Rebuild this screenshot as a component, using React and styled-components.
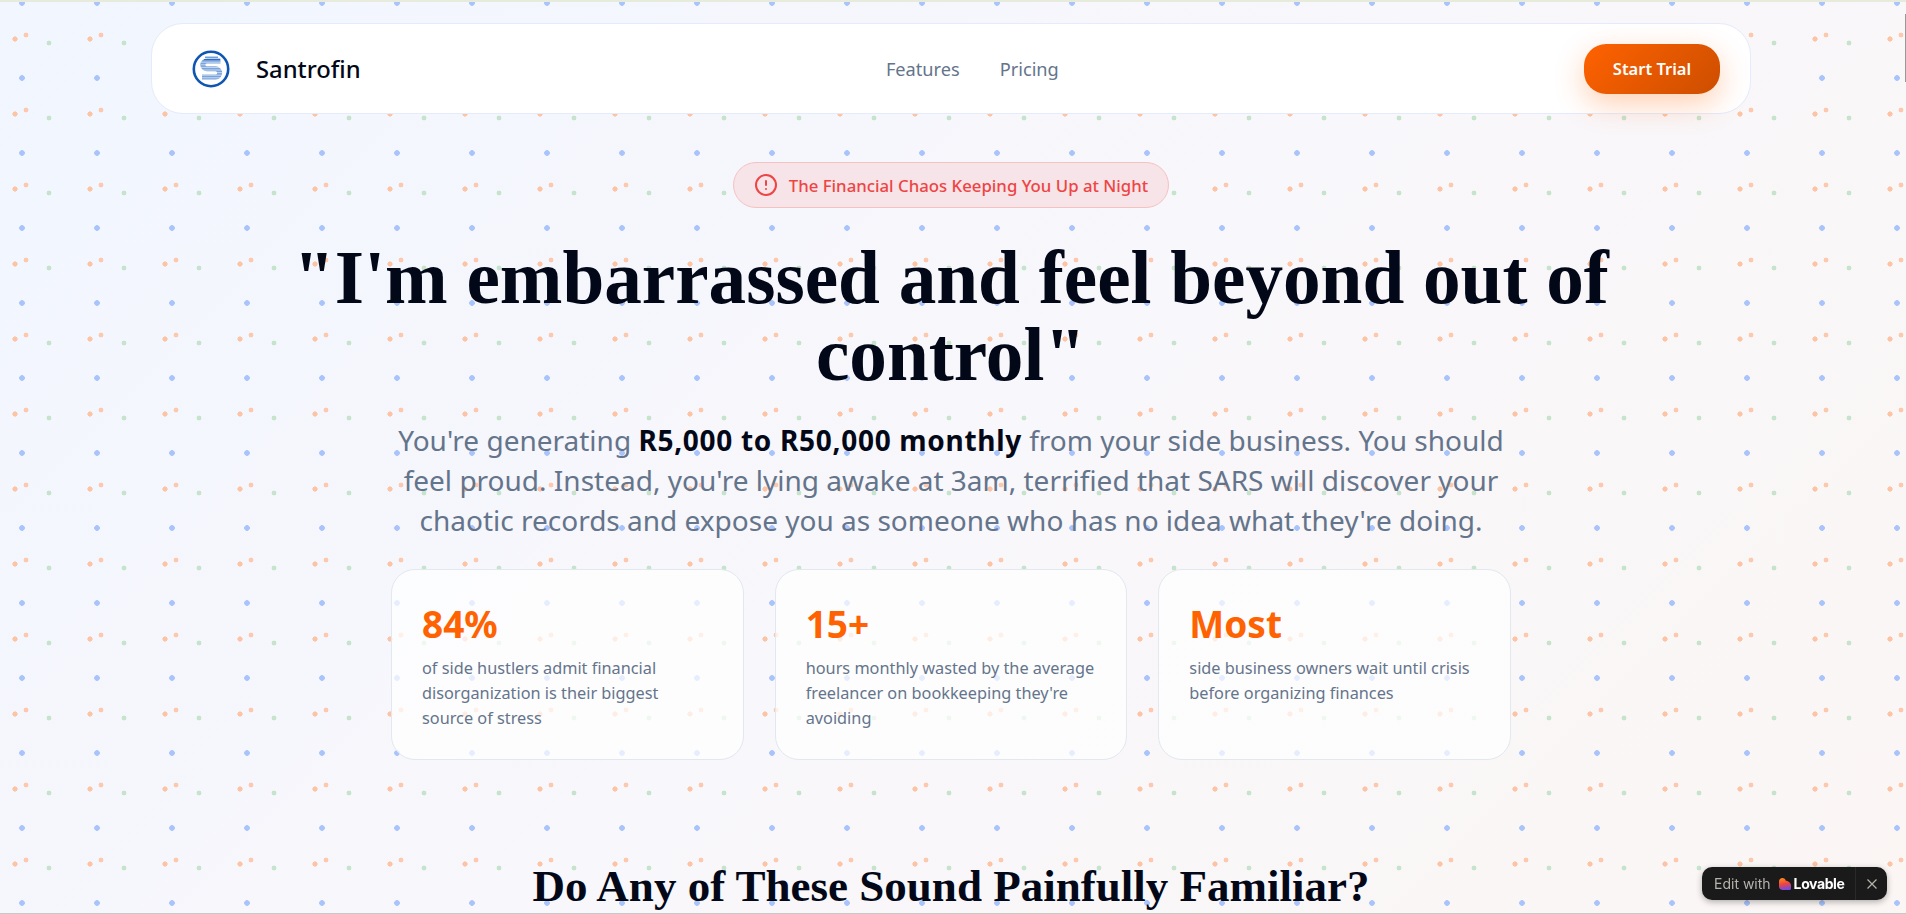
import React from 'react';
import styled, { createGlobalStyle } from 'styled-components';

const GlobalStyle = createGlobalStyle`
  html, body {
    margin: 0;
    padding: 0;
    height: 100%;
    overflow: hidden;
  }
  body {
    font-family: "Noto Sans", "Open Sans", Arial, sans-serif;
    color: #020817;
  }
`;

const dot = (x, y, r, color) =>
  `radial-gradient(circle at ${x}px ${y}px, ${color} ${r}px, transparent ${r + 0.6}px)`;

const Page = styled.div`
  height: 914px;
  overflow: hidden;
  box-sizing: border-box;
  padding-right: 4px;
  border-top: 2px solid #e6ebdc;
  border-bottom: 1px solid #c8c8c8;
  background-image:
    ${dot(22, 5, 2.5, '#a9c3fb')},
    ${dot(15, 37, 2.3, '#fcc4a5')},
    ${dot(26, 33, 2.1, '#fcc9ae')},
    ${dot(49, 41, 2.1, '#c6e3cb')},
    linear-gradient(135deg, #f1f6ff 0%, #f8f7fb 50%, #fbf6f4 100%);
  background-size: 75px 75px, 75px 75px, 75px 75px, 75px 75px, 100% 100%;
  background-position: 0 -4px, 0 0, 0 0, 0 0, 0 0;
`;

const ScrollThumb = styled.div`
  position: fixed;
  top: 14px;
  right: 0;
  width: 1px;
  height: 68px;
  background: #999;
`;

const Nav = styled.nav`
  width: 1600px;
  height: 91px;
  margin: 21px auto 0;
  padding: 0 30px 0 40px;
  box-sizing: border-box;
  display: flex;
  align-items: center;
  justify-content: space-between;
  background: #fff;
  border: 1px solid #e3ebfc;
  border-radius: 32px;
`;

const Brand = styled.div`
  display: flex;
  align-items: center;
  gap: 26px;
  font-size: 23.8px;
  font-weight: 500;
  color: #020817;
`;

const NavLinks = styled.div`
  display: flex;
  gap: 40px;
`;

const NavLink = styled.a`
  font-size: 18.2px;
  color: #64748b;
`;

const TrialButton = styled.button`
  width: 136px;
  height: 50px;
  border: none;
  border-radius: 22px;
  font-family: inherit;
  font-size: 16.5px;
  font-weight: 600;
  color: #fff;
  background: linear-gradient(135deg, #ff6200 0%, #cc4e00 100%);
  box-shadow: 0 10px 30px rgba(255, 98, 0, 0.3);
`;

const Hero = styled.section`
  display: flex;
  flex-direction: column;
  align-items: center;
  margin: 0 auto;
  padding-top: 48px;
`;

const Badge = styled.div`
  display: flex;
  align-items: center;
  gap: 11px;
  height: 46px;
  padding: 0 20px;
  box-sizing: border-box;
  border: 1px solid #f5c2c2;
  border-radius: 23px;
  background: #f6e4e8;
  color: #ef4444;
  font-size: 16.8px;
  font-weight: 500;
`;

const Title = styled.h1`
  width: 1400px;
  margin: 31px 0 0;
  text-align: center;
  font-family: "Liberation Serif", "Times New Roman", serif;
  font-size: 75.2px;
  line-height: 77px;
  font-weight: 700;
  color: #020817;
`;

const Lead = styled.p`
  width: 1120px;
  margin: 27px 0 0;
  text-align: center;
  font-size: 28px;
  line-height: 40px;
  color: #64748b;

  strong {
    font-weight: 700;
    letter-spacing: 0.7px;
    color: #020817;
  }
`;

const Stats = styled.div`
  display: grid;
  grid-template-columns: repeat(3, 1fr);
  gap: 31px;
  width: 1120px;
  margin-top: 29px;
`;

const Stat = styled.div`
  box-sizing: border-box;
  height: 191px;
  padding: 32px 30px 0;
  border: 1px solid #e2e8f0;
  border-radius: 24px;
  background: rgba(255, 255, 255, 0.7);
`;

const StatValue = styled.div`
  font-size: 37px;
  line-height: 44px;
  font-weight: 700;
  color: #ff6200;
`;

const StatText = styled.div`
  margin-top: 10px;
  font-size: 16.3px;
  line-height: 25px;
  color: #64748b;
`;

const SectionTitle = styled.h2`
  margin: 102px 0 0;
  text-align: center;
  font-family: "Liberation Serif", "Times New Roman", serif;
  font-size: 45px;
  line-height: 48px;
  font-weight: 700;
  color: #020817;
`;

const EditBadge = styled.div`
  position: fixed;
  right: 19px;
  bottom: 14px;
  display: flex;
  align-items: center;
  height: 33px;
  border-radius: 10px;
  background: #1a1a1a;
  box-shadow: 0 2px 6px rgba(0, 0, 0, 0.3);
  font-family: Inter, sans-serif;
  font-size: 14px;
`;

const EditLabel = styled.div`
  display: flex;
  align-items: center;
  width: 153px;
  box-sizing: border-box;
  gap: 8px;
  padding-left: 12px;
  color: #b5b3ad;
`;

const LovableName = styled.span`
  color: #fff;
  font-weight: 700;
  margin-left: -5px;
  letter-spacing: -0.4px;
`;

const CloseButton = styled.div`
  display: flex;
  align-items: center;
  justify-content: center;
  width: 31px;
  height: 33px;
  border-left: 1px solid #2a2a2a;
  color: #b5b3ad;
`;

const Logo = () => (
  <svg width="38" height="38" viewBox="0 0 38 38" fill="none">
    <circle cx="19" cy="19" r="17.2" stroke="#0f56b3" strokeWidth="2.6" />
    <path d="M28.5 11H15C9.5 11 9.5 18.8 15 18.8H23.5C29 18.8 29 27 23.5 27H10" stroke="#7aa3dc" strokeWidth="5" />
    <path d="M9 12.2H30M9 14.8H30M9 17.4H30M9 20H30M9 22.6H30M9 25.2H30M9 27.8H30" stroke="#fff" strokeWidth="0.6" />
    <path d="M13 7.2H26M12 9.6H28" stroke="#1a62c0" strokeWidth="0.9" />
  </svg>
);

const AlertIcon = () => (
  <svg width="24" height="24" viewBox="0 0 24 24" fill="none" stroke="currentColor" strokeWidth="2" strokeLinecap="round" strokeLinejoin="round">
    <circle cx="12" cy="12" r="10" />
    <line x1="12" y1="8" x2="12" y2="12" />
    <line x1="12" y1="16" x2="12.01" y2="16" />
  </svg>
);

const LovableMark = () => (
  <svg width="12" height="12" viewBox="0 0 12 12">
    <defs>
      <linearGradient id="lovable" x1="0.3" y1="0" x2="0.5" y2="1">
        <stop offset="0" stopColor="#ff8a1e" />
        <stop offset="0.5" stopColor="#f0443f" />
        <stop offset="1" stopColor="#6d4be8" />
      </linearGradient>
    </defs>
    <path d="M0 3.4C0 1.4 1.6 0 3.4 0C5.2 0 6.6 1.4 6.8 2.8C8.6 2.8 12 4.4 12 7.6V10.5C12 11.4 11.4 12 10.5 12H3.4C1.4 12 0 10.4 0 8.6Z" fill="url(#lovable)" />
  </svg>
);

const stats = [
  { value: '84%', text: 'of side hustlers admit financial disorganization is their biggest source of stress' },
  { value: '15+', text: "hours monthly wasted by the average freelancer on bookkeeping they're avoiding" },
  { value: 'Most', text: 'side business owners wait until crisis before organizing finances' },
];

const App = () => {
  return (
    <Page>
      <GlobalStyle />
      <ScrollThumb />
      <Nav>
        <Brand>
          <Logo />
          Santrofin
        </Brand>
        <NavLinks>
          <NavLink>Features</NavLink>
          <NavLink>Pricing</NavLink>
        </NavLinks>
        <TrialButton>Start Trial</TrialButton>
      </Nav>
      <Hero>
        <Badge>
          <AlertIcon />
          The Financial Chaos Keeping You Up at Night
        </Badge>
        <Title>"I'm embarrassed and feel beyond out of control"</Title>
        <Lead>
          You're generating <strong>R5,000 to R50,000 monthly</strong> from your side business. You should
          feel proud. Instead, you're lying awake at 3am, terrified that SARS will discover your chaotic
          records and expose you as someone who has no idea what they're doing.
        </Lead>
        <Stats>
          {stats.map((s) => (
            <Stat key={s.value}>
              <StatValue>{s.value}</StatValue>
              <StatText>{s.text}</StatText>
            </Stat>
          ))}
        </Stats>
        <SectionTitle>Do Any of These Sound Painfully Familiar?</SectionTitle>
      </Hero>
      <EditBadge>
        <EditLabel>
          Edit with
          <LovableMark />
          <LovableName>Lovable</LovableName>
        </EditLabel>
        <CloseButton>
          <svg width="12" height="12" viewBox="0 0 12 12" stroke="currentColor" strokeWidth="1.2">
            <path d="M1.5 1.5L10.5 10.5M10.5 1.5L1.5 10.5" />
          </svg>
        </CloseButton>
      </EditBadge>
    </Page>
  );
};

export default App;
